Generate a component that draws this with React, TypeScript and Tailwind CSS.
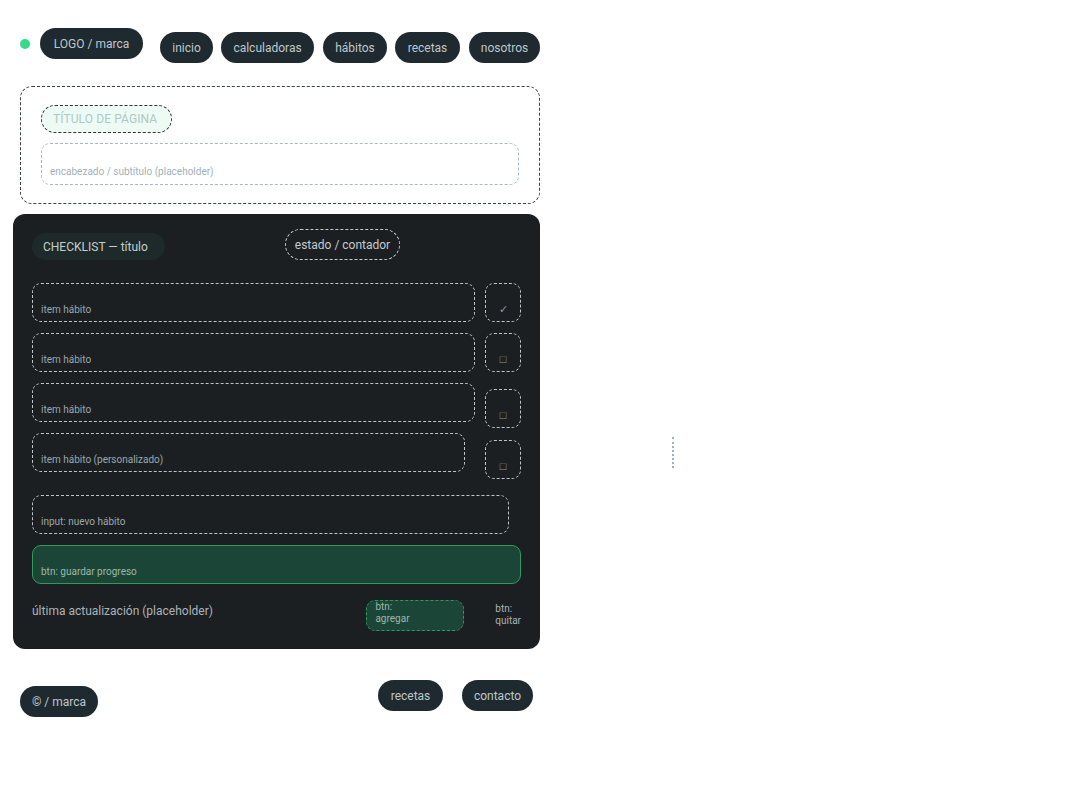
import React from 'react';

const navItems = ['inicio', 'calculadoras', 'hábitos', 'recetas', 'nosotros'];

const Pill = ({ children, className = '' }: { children: React.ReactNode; className?: string }) => (
  <span
    className={`inline-flex items-center justify-center h-[31px] rounded-full bg-[#1f2a30] text-[#bec7cb] text-[12px] leading-none whitespace-nowrap ${className}`}
  >
    {children}
  </span>
);

const HabitRow = ({ label, mark, itemW, boxMt }: { label: string; mark: string; itemW: string; boxMt: string }) => (
  <div className="h-[39px] w-[489px] flex items-start justify-between">
    <div
      className={`${itemW} h-[39px] flex items-end pb-[4px] pl-[8px] rounded-[9px] border border-dashed border-[#bfc6ca] text-[10px] text-[#9aa7ad]`}
    >
      {label}
    </div>
    <div
      className={`${boxMt} w-[36px] h-[39px] shrink-0 flex items-end justify-center pb-[6px] rounded-[9px] border border-dashed border-[#bfc6ca] text-[11px] leading-none text-[#8e999e]`}
    >
      {mark}
    </div>
  </div>
);

export default function App() {
  return (
    <div className="min-h-[798px] w-[1080px] bg-white flex" style={{ fontFamily: 'Roboto, "Noto Sans", sans-serif' }}>
      <div className="w-[540px] flex flex-col">
        {/* header */}
        <header className="flex items-start mt-[28px] ml-[20px]">
          <span className="mt-[11px] w-[10px] h-[10px] rounded-full bg-[#34d98a]" />
          <Pill className="ml-[10px] w-[103px] text-[12.5px]">LOGO / marca</Pill>
          <nav className="flex mt-[4px] ml-[17px]">
            <Pill className="w-[53px]">{navItems[0]}</Pill>
            <Pill className="ml-[8px] w-[93px]">{navItems[1]}</Pill>
            <Pill className="ml-[9px] w-[64px]">{navItems[2]}</Pill>
            <Pill className="ml-[8px] w-[65px]">{navItems[3]}</Pill>
            <Pill className="ml-[9px] w-[71px]">{navItems[4]}</Pill>
          </nav>
        </header>

        {/* page heading */}
        <section className="mt-[23px] ml-[20px] w-[520px] h-[118px] rounded-[12px] border border-dashed border-[#3a4246] px-[20px] pt-[18px]">
          <div className="inline-flex items-center h-[28px] w-[131px] px-[11px] rounded-full border border-dashed border-[#2c3438] bg-[#eefaf4] text-[12px] text-[#abcac3] tracking-[0.1px]">
            TÍTULO DE PÁGINA
          </div>
          <div className="mt-[10px] h-[42px] flex items-end pb-[5px] pl-[8px] rounded-[9px] border border-dashed border-[#a9b8bf] text-[10px] text-[#9fb1b9]">
            encabezado / subtítulo (placeholder)
          </div>
        </section>

        {/* checklist */}
        <section className="mt-[10px] ml-[13px] w-[527px] h-[435px] rounded-[12px] bg-[#1b1f22] pl-[19px] pr-[19px] pt-[15px]">
          <div className="flex items-start">
            <span className="mt-[4px] inline-flex items-center h-[27px] w-[133px] px-[11px] rounded-full bg-[#1e2a29] text-[12px] text-[#c3cfcb]">
              CHECKLIST — título
            </span>
            <span className="ml-[120px] inline-flex items-center justify-center h-[31px] w-[115px] rounded-full border border-dashed border-[#c5ccd0] text-[12px] text-[#c3cbcf]">
              estado / contador
            </span>
          </div>

          <div className="mt-[23px] flex flex-col gap-[11px]">
            <HabitRow label="item hábito" mark="✓" itemW="w-[443px]" boxMt="mt-0" />
            <HabitRow label="item hábito" mark="□" itemW="w-[443px]" boxMt="mt-0" />
            <HabitRow label="item hábito" mark="□" itemW="w-[443px]" boxMt="mt-[6px]" />
            <HabitRow label="item hábito (personalizado)" mark="□" itemW="w-[433px]" boxMt="mt-[7px]" />
          </div>

          <div className="mt-[23px] w-[477px] h-[39px] flex items-end pb-[4px] pl-[8px] rounded-[9px] border border-dashed border-[#bfc6ca] text-[10px] text-[#9aa7ad]">
            input: nuevo hábito
          </div>

          <div className="mt-[11px] w-[489px] h-[39px] flex items-end pb-[4px] pl-[8px] rounded-[9px] border border-[#2f9a5b] bg-[#1b4536] text-[10px] text-[#9db7ad]">
            btn: guardar progreso
          </div>

          <div className="mt-[16px] flex items-start">
            <span className="mt-[2px] w-[335px] text-[12px] text-[#aab4b8]">última actualización (placeholder)</span>
            <div className="w-[98px] h-[31px] flex flex-col justify-start pl-[8px] rounded-[9px] border border-dashed border-[#2f9a5b] bg-[#1b4536] text-[10px] leading-[12px] text-[#9db7ad]">
              <span>btn:</span>
              <span>agregar</span>
            </div>
            <div className="ml-[31px] mt-[3px] flex flex-col text-[10px] leading-[12px] text-[#aab4b8]">
              <span>btn:</span>
              <span>quitar</span>
            </div>
          </div>
        </section>

        {/* footer */}
        <footer className="mt-[31px] ml-[20px] flex items-start">
          <Pill className="mt-[6px] w-[78px]">© / marca</Pill>
          <Pill className="ml-[280px] w-[65px]">recetas</Pill>
          <Pill className="ml-[19px] w-[71px]">contacto</Pill>
        </footer>
      </div>

      <div className="ml-[132px] mt-[437px] h-[31px] border-l-2 border-dotted border-[#9fb0b8]" />
    </div>
  );
}
